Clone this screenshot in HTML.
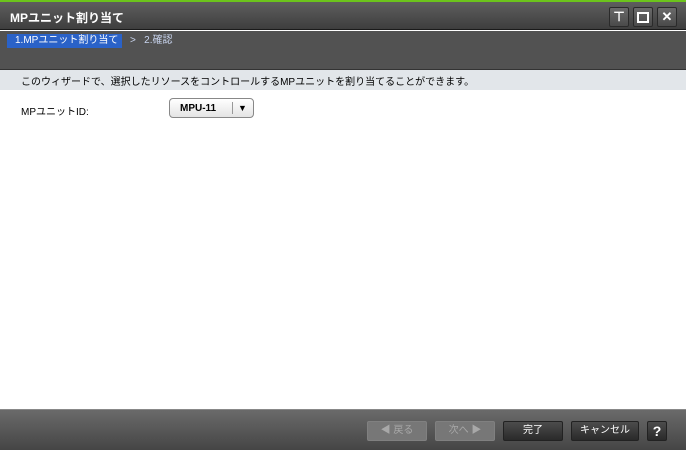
<!DOCTYPE html>
<html><head><meta charset="utf-8"><style>
*{margin:0;padding:0;box-sizing:border-box}
body{width:686px;height:450px;overflow:hidden;background:#fff;font-family:"Liberation Sans","Noto Sans CJK JP",sans-serif;font-size:10px;position:relative}
.abs{position:absolute;white-space:nowrap}
#green{left:0;top:0;width:686px;height:2px;background:#6cc41c}
#title{left:0;top:2px;width:686px;height:28px;background:linear-gradient(#5e5e5e,#3e3e3e);border-bottom:1px solid #1a1a1a}
#title span{position:absolute;left:10px;top:7px;color:#fff;font-weight:bold;font-size:12px}
.wb{top:7px;width:20px;height:20px;border:1px solid #2a2a2a;border-radius:2px;background:linear-gradient(#6a6a6a,#4a4a4a);color:#fff;text-align:center;font-weight:bold;font-size:13px;line-height:18px}
#steps{left:0;top:31px;width:686px;height:39px;background:#525252;border-bottom:1px solid #333}
#s1{left:7px;top:3px;width:115px;height:14px;background:#2a62c8;color:#fff;padding-left:8px;line-height:14px}
#s2{left:130px;top:3px;color:#c8d4ee;line-height:14px}
#info{left:0;top:70px;width:686px;height:20px;background:#e2e6ea;padding:3px 0 0 21px;color:#000}
#lbl{left:21px;top:103px}
#dd{left:169px;top:98px;width:85px;height:20px;border:1px solid #888;border-radius:4px;background:linear-gradient(#fff,#e4e4e4);}
#dd span{position:absolute;left:10px;top:4px;font-weight:bold}
#dd i{position:absolute;left:62px;top:3px;width:1px;height:12px;background:#999}
#dd b{position:absolute;left:68px;top:4px;font-size:9px}
#foot{left:0;top:409px;width:686px;height:41px;background:linear-gradient(#6a6a6a,#454545);border-top:1px solid #888}
.fb{top:11px;height:20px;border:1px solid #222;border-radius:2px;background:linear-gradient(#4c4c4c,#2a2a2a);color:#fff;text-align:center;line-height:18px}
.dis{background:#777;border-color:#808080;color:#a8a8a8}
</style></head><body>
<div class="abs" id="green"></div>
<div class="abs" id="title"><span>MPユニット割り当て</span></div>
<div class="abs wb" style="left:609px">⊤</div>
<div class="abs wb" style="left:633px"><div style="margin:4px 3px;height:11px;border:2px solid #fff"></div></div>
<div class="abs wb" style="left:657px">✕</div>
<div class="abs" id="steps"><div class="abs" id="s1">1.MPユニット割り当て</div><div class="abs" id="s2">&gt;&nbsp;&nbsp; 2.確認</div></div>
<div class="abs" id="info">このウィザードで、選択したリソースをコントロールするMPユニットを割り当てることができます。</div>
<div class="abs" id="lbl">MPユニットID:</div>
<div class="abs" id="dd"><span>MPU-11</span><i></i><b>▼</b></div>
<div class="abs" id="foot">
<div class="abs fb dis" style="left:367px;width:60px">◀ 戻る</div>
<div class="abs fb dis" style="left:435px;width:60px">次へ ▶</div>
<div class="abs fb" style="left:503px;width:60px">完了</div>
<div class="abs fb" style="left:571px;width:68px">キャンセル</div>
<div class="abs fb" style="left:647px;width:20px;font-weight:bold;font-size:14px">?</div>
</div>
</body></html>
